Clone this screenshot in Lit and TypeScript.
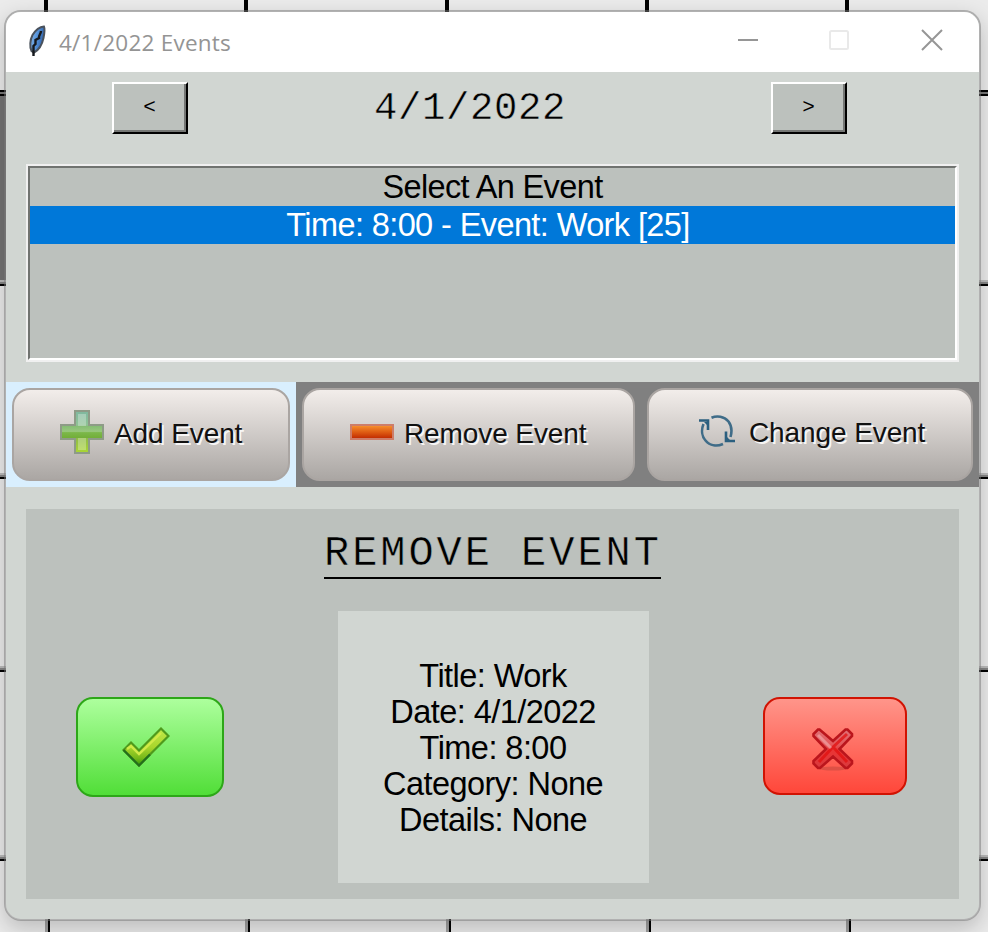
import { LitElement, html, svg, css } from "lit";
import { customElement } from "lit/decorators.js";

const feather = html`<svg width="20" height="34" viewBox="0 0 20 34">
  <defs><linearGradient id="f" x1="0" y1="0" x2="1" y2="0.3"><stop offset="0" stop-color="#8fb8e4"/><stop offset=".5" stop-color="#5a97dc"/><stop offset="1" stop-color="#2d62ad"/></linearGradient></defs>
  <path d="M16 1.500C11 2 7 6 4.500 10C2 15 1.500 22 3.500 26L6 27.500C11 25 14 20 15.500 13C16.500 8 17 4 16 1.500Z" fill="url(#f)" stroke="#4a525c" stroke-width="2"/>
  <path d="M13 6C13 9 10.500 10 11 13L7.500 15V19L5.500 21V31" fill="none" stroke="#16191d" stroke-width="2.400"/>
</svg>`;

const plus = html`<svg width="44" height="44" viewBox="0 0 44 44">
  <defs>
    <linearGradient id="pv" x1="0" y1="0" x2="0" y2="1"><stop offset="0" stop-color="#7fb8a0"/><stop offset=".32" stop-color="#8fc296"/><stop offset=".5" stop-color="#7ab648"/><stop offset=".65" stop-color="#8fbb48"/><stop offset="1" stop-color="#abd733"/></linearGradient>
    <linearGradient id="ph" x1="0" y1="0" x2="0" y2="1"><stop offset="0" stop-color="#85bd74"/><stop offset=".45" stop-color="#99c77e"/><stop offset=".55" stop-color="#7cb84a"/><stop offset="1" stop-color="#72ae38"/></linearGradient>
  </defs>
  <path d="M15 1H29V15H43V29H29V43H15V29H1V15H15Z" fill="url(#pv)" stroke="#8e9b87" stroke-width="2"/>
  <rect x="2" y="16" width="40" height="12" fill="url(#ph)"/>
  <path d="M18 4H26V16H18ZM18 28H26V40H18Z" fill="#fff" opacity=".28"/>
</svg>`;

const minus = html`<svg width="44" height="16" viewBox="0 0 44 16">
  <defs><linearGradient id="m" x1="0" y1="0" x2="0" y2="1"><stop offset="0" stop-color="#fb9b30"/><stop offset=".2" stop-color="#ef7d24"/><stop offset=".6" stop-color="#d9520f"/><stop offset="1" stop-color="#bd2500"/></linearGradient></defs>
  <rect x="1" y="1" width="42" height="14" fill="url(#m)" stroke="#cd7d69" stroke-width="2"/>
</svg>`;

const cycle = html`<svg width="36" height="32" viewBox="0 0 36 32" fill="none" stroke="#3f6c88" stroke-width="2.600">
  <path d="M12.500 2.800C18 .5 25 1.300 29.500 6.500C32.500 10.500 33.500 15 31.500 22"/>
  <path d="M24 29C18 31.500 11 31 6.500 25.500C3 21.500 2 15 4.500 9"/>
  <path d="M0 5.500H9V15M27 16.500V26H36" stroke="#2b5f7f"/>
  <path d="M28 22L31 25H28ZM5 7H8V10Z" fill="#2b5f7f" stroke="none"/>
</svg>`;

const check = html`<svg width="48" height="40" viewBox="0 0 48 40">
  <defs><linearGradient id="c" x1="0" y1="0" x2="0" y2="1"><stop offset="0" stop-color="#bfe94a"/><stop offset=".5" stop-color="#a9d62c"/><stop offset=".8" stop-color="#76b81a"/><stop offset="1" stop-color="#2f9a08"/></linearGradient></defs>
  <path d="M39 1.500L46.500 9L17 38.500L1.500 23L9 15.500L17 23.500Z" fill="url(#c)" stroke="#4f9a1c" stroke-width="2.200"/>
  <path d="M1.500 23L17 38.500L28 27.500" fill="none" stroke="#236f1b" stroke-width="2.200"/>
  <path d="M5 22L9 19L17 27L39 6" fill="none" stroke="#d0ea48" stroke-width="2.400"/>
</svg>`;

const cross = html`<svg width="42" height="43" viewBox="0 0 42 43">
  <defs><linearGradient id="x" x1="0" y1="0" x2="0" y2="1"><stop offset="0" stop-color="#e07076"/><stop offset=".4" stop-color="#e5575a"/><stop offset=".55" stop-color="#ea3535"/><stop offset="1" stop-color="#d93a3e"/></linearGradient></defs>
  <ellipse cx="21" cy="40.500" rx="14" ry="2" fill="#c84a40" opacity=".6"/>
  <path d="M7.500 1.500L21 13L33.500 1.500H35.500L40 6V8L27.500 21L40 33V35.500L35.500 40H33.500L21 28.500L8 40H6L1.500 35.500V33L14 21L1.500 8V6L6 1.500Z" fill="url(#x)" stroke="#bb151c" stroke-width="2.600"/>
  <path d="M20 20L7 34M22 20L35 34M20 20L35 6" stroke="#e01010" stroke-width="3" opacity=".75" fill="none"/>
  <path d="M6 7L19 20" stroke="#f0a4a6" stroke-width="3" opacity=".7"/>
</svg>`;

@customElement("app-root")
export class AppRoot extends LitElement {
  static styles = css`
    :host { display: grid; width: 988px; height: 932px; overflow: hidden; background: #ebebeb; font-family: "Liberation Sans", Arial, sans-serif; color: #000; }
    svg { display: block; flex: none; }
    .backdrop, .window { grid-area: 1 / 1; }
    .window { box-sizing: border-box; margin: 10px 0 0 4px; width: 977px; height: 911px; border: 2px solid rgba(120,120,120,.5); border-radius: 17px; background: #d1d6d2; background-clip: padding-box; overflow: hidden; box-shadow: 0 8px 22px rgba(0,0,0,.2); display: flex; flex-direction: column; z-index: 1; }
    .title { height: 60px; flex: none; background: #fff; display: flex; align-items: center; padding-left: 22px; color: #949494; }
    .title span { font: 22.500px/30px "Open Sans", "Noto Sans", sans-serif; margin-left: 11px; width: 678px; letter-spacing: .24px; padding-top: 2px; }
    .controls { margin-top: -4px; }
    .nav { height: 92px; flex: none; display: flex; align-items: flex-start; padding: 10px 132px 0 106px; box-sizing: border-box; justify-content: space-between; }
    .step { all: unset; box-sizing: border-box; width: 76px; height: 52px; border: 2px solid; border-color: #fff #000 #000 #fff; box-shadow: inset -2px -2px #757775; background: #bcc1bd; text-align: center; font: 21px/48px "Liberation Mono", monospace; padding-right: 1px; }
    .date { font: 39px/54px "Liberation Mono", monospace; letter-spacing: .6px; margin-left: -19px; -webkit-text-stroke: .5px #d1d6d2; }
    .list { box-sizing: border-box; margin: 0 20px; height: 198px; flex: none; border: 2px solid #f0f0f0; }
    .inner { box-sizing: border-box; height: 100%; border: 2px solid; border-color: #707370 #fff #fff #707370; background: #bcc1bd; font-size: 32.500px; line-height: 39px; text-align: center; }
    .row { height: 38px; }
    .first { letter-spacing: -.62px; }
    .picked { background: #0078d9; color: #fff; letter-spacing: -.6px; padding-right: 9px; }
    .tabs { margin-top: 20px; height: 105px; flex: none; display: flex; background: #808080; }
    .cell { padding: 6px; box-sizing: border-box; height: 105px; }
    .add { width: 290px; background: #d9effe; }
    .remove { width: 345px; }
    .change { width: 338px; }
    .tab { all: unset; box-sizing: border-box; width: 100%; height: 93px; border: 2px solid #aaa5a2; border-radius: 18px; background: linear-gradient(#f4efec, #a9a5a2) border-box; display: flex; align-items: center; padding: 0 0 2px 46px; font-size: 28px; color: #111; letter-spacing: -.1px; text-shadow: 2px 2px 0 rgba(255,255,255,.85); white-space: nowrap; }
    .tab span { margin-left: 10px; }
    .change .tab { padding: 0 0 6px 50px; }
    .change span { margin-left: 14px; padding-top: 2px; }
    .cycle { margin-top: -1px; }
    .minus, .plus { padding-bottom: 3px; }
    .panel { margin: 22px 20px 0; height: 390px; flex: none; background: #bcc1bd; display: flex; flex-direction: column; align-items: center; }
    .heading { margin: 16px 0 0; box-sizing: border-box; height: 54px; width: 337px; font: 42px/58px "Liberation Mono", monospace; letter-spacing: 2.950px; white-space: nowrap; border-bottom: 2px solid #000; -webkit-text-stroke: .5px #bcc1bd; }
    .body { margin-top: 32px; width: 933px; display: flex; align-items: flex-start; }
    .confirm, .cancel { all: unset; box-sizing: border-box; display: flex; border: 2px solid; border-radius: 17px; margin-top: 86px; }
    .confirm { margin-left: 50px; width: 148px; height: 100px; border-color: #2da718; background: linear-gradient(#adff9d, #51de38); padding: 28px 0 0 44px; }
    .cancel { margin-left: 114px; width: 144px; height: 98px; border-color: #d11303; background: linear-gradient(#ff958a, #ff473a); padding: 29px 0 0 47px; }
    .details { box-sizing: border-box; margin-left: 114px; width: 311px; height: 272px; padding: 47px 1px 0 0; background: #d1d6d2; text-align: center; font-size: 32.500px; line-height: 36px; letter-spacing: -.55px; }
  `;

  private grid() {
    const tops = [44, 244, 445, 645, 845];
    const rows = [280, 473, 666, 855];
    return html`<svg class="backdrop" width="988" height="932" viewBox="0 0 988 932">
      <rect y="96" width="8" height="184" fill="#737373"/>
      ${[0, 976].map((x) => svg`<path d="M${x} 90h12v6h-12z" fill="#000"/><path d="M${x} 92h12v2h-12z" fill="#777"/>
        ${rows.map((y) => svg`<path d="M${x} ${y}h12v2h-12z" fill="#bbb"/><path d="M${x} ${y + 2}h12v2h-12z" fill="#858585"/><path d="M${x} ${y + 4}h12v2h-12z" fill="#000"/>`)}`)}
      ${tops.map((x) => svg`<rect x=${x} width="4" height="14" fill="#000"/><rect x=${x + 1} y="916" width="3" height="16" fill="#a0a0a0"/><rect x=${x + 4} y="916" width="2" height="16" fill="#000"/>`)}
    </svg>`;
  }

  render() {
    return html`${this.grid()}
      <main class="window">
        <header class="title">${feather}<span>4/1/2022 Events</span>
          <svg class="controls" width="210" height="24" viewBox="0 0 210 24" fill="none" stroke="#969696" stroke-width="2">
            <path d="M1 12H21"/><rect x="93" y="3" width="18" height="18" rx="1.500" stroke="#e9e9e9"/><path d="M185 2L205 22M205 2L185 22"/>
          </svg>
        </header>
        <nav class="nav"><button class="step">&lt;</button><div class="date">4/1/2022</div><button class="step">&gt;</button></nav>
        <section class="list"><div class="inner"><div class="row first">Select An Event</div><div class="row picked">Time: 8:00 - Event: Work [25]</div></div></section>
        <section class="tabs">
          <div class="cell add"><button class="tab"><div class="plus">${plus}</div><span>Add Event</span></button></div>
          <div class="cell remove"><button class="tab"><div class="minus">${minus}</div><span>Remove Event</span></button></div>
          <div class="cell change"><button class="tab"><div class="cycle">${cycle}</div><span>Change Event</span></button></div>
        </section>
        <section class="panel">
          <h1 class="heading">REMOVE EVENT</h1>
          <div class="body">
            <button class="confirm">${check}</button>
            <div class="details"><div>Title: Work</div><div>Date: 4/1/2022</div><div>Time: 8:00</div><div>Category: None</div><div>Details: None</div></div>
            <button class="cancel">${cross}</button>
          </div>
        </section>
      </main>`;
  }
}
